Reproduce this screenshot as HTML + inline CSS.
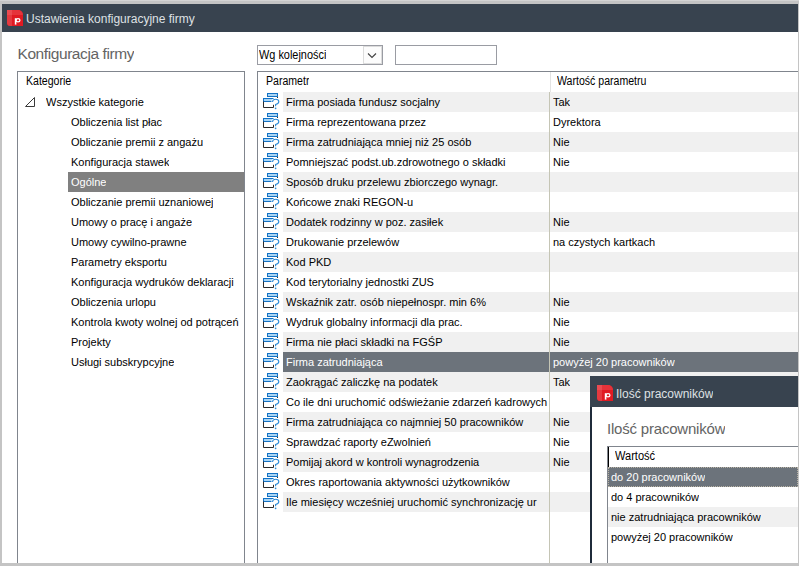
<!DOCTYPE html><html><head><meta charset="utf-8"><style>
*{margin:0;padding:0;box-sizing:border-box}
html,body{width:799px;height:566px;overflow:hidden;background:#c4c4c4}
body{position:relative;font-family:"Liberation Sans",sans-serif;font-size:11px;color:#000}
.a{position:absolute}
.h{font-size:12px;transform:scaleX(0.88);transform-origin:0 0}
.t{position:absolute;white-space:nowrap;line-height:20px;height:20px;overflow:hidden}
</style></head><body>
<div class="a" style="left:2px;top:4px;width:796px;height:28px;background:#38434f"></div>
<svg width="16" height="16" viewBox="0 0 16 16" style="position:absolute;left:7px;top:10px">
<path d="M0 0H11A5 5 0 0 1 16 5V16H3.5A3.5 3.5 0 0 1 0 12.5Z" fill="#e01a22"/>
<path d="M0 0H5V5H0Z" fill="#ea4b51"/>
<path d="M5 0H11A5 5 0 0 1 16 5H5Z" fill="#e5333a"/>
<path d="M0 5H5V16H3.5A3.5 3.5 0 0 1 0 12.5Z" fill="#e4393f"/>
<path d="M8.6 8.2V14.6" stroke="#fff" stroke-width="1.6"/>
<ellipse cx="11" cy="10.3" rx="1.95" ry="1.6" stroke="#fff" stroke-width="1.25" fill="none"/>
</svg>
<div class="t" style="left:26px;top:9px;font-size:12px;color:#dfe1e4">Ustawienia konfiguracyjne firmy</div>
<div class="a" style="left:2px;top:32px;width:796px;height:531px;background:#fff"></div>
<div class="t" style="left:17.5px;top:43.5px;font-size:15.5px;letter-spacing:-0.42px;color:#646464">Konfiguracja firmy</div>
<div class="a" style="left:257px;top:45px;width:126px;height:20px;border:1px solid #9a9ca3;background:#fff"></div>
<div class="t h" style="left:259px;top:45px;transform:scaleX(0.91)">Wg kolejności</div>
<div class="a" style="left:363px;top:46px;width:19px;height:18px;border:1px solid #dcdcdc;background:#fcfcfc"></div>
<svg class="a" style="left:363px;top:46px" width="19" height="18"><path d="M5 7.5L9 11.5L13 7.5" stroke="#404040" stroke-width="1.1" fill="none"/></svg>
<div class="a" style="left:395px;top:45px;width:102px;height:20px;border:1px solid #9a9ca3;background:#fff"></div>
<div class="a" style="left:17px;top:71px;width:228px;height:500px;border:1px solid #80858d;background:#fff"></div>
<div class="t h" style="left:25.5px;top:71px">Kategorie</div>
<svg class="a" style="left:24px;top:96px" width="12" height="12"><path d="M1.5 10.5L10.5 1.5V10.5Z" stroke="#3a3a3a" fill="none"/></svg>
<div class="t" style="left:46px;top:92px">Wszystkie kategorie</div>
<div class="t" style="left:71px;top:112px">Obliczenia list płac</div>
<div class="t" style="left:71px;top:132px">Obliczanie premii z angażu</div>
<div class="t" style="left:71px;top:152px">Konfiguracja stawek</div>
<div class="a" style="left:68px;top:172px;width:176px;height:20px;background:#808080"></div>
<div class="t" style="left:71px;top:172px;color:#fff">Ogólne</div>
<div class="t" style="left:71px;top:192px">Obliczanie premii uznaniowej</div>
<div class="t" style="left:71px;top:212px">Umowy o pracę i angaże</div>
<div class="t" style="left:71px;top:232px">Umowy cywilno-prawne</div>
<div class="t" style="left:71px;top:252px">Parametry eksportu</div>
<div class="t" style="left:71px;top:272px">Konfiguracja wydruków deklaracji</div>
<div class="t" style="left:71px;top:292px">Obliczenia urlopu</div>
<div class="t" style="left:71px;top:312px">Kontrola kwoty wolnej od potrąceń</div>
<div class="t" style="left:71px;top:332px">Projekty</div>
<div class="t" style="left:71px;top:352px">Usługi subskrypcyjne</div>
<div class="a" style="left:257px;top:71px;width:560px;height:500px;border:1px solid #80858d;background:#fff"></div>
<div class="t h" style="left:265.5px;top:71px">Parametr</div>
<div class="a" style="left:550px;top:72px;width:1px;height:20px;background:#e3e3e3"></div>
<div class="t h" style="left:557px;top:71px">Wartość parametru</div>
<div class="a" style="left:549px;top:92px;width:1px;height:480px;background:#c5c5b5"></div>
<div class="a" style="left:283px;top:92px;width:266px;height:20px;background:#f0f0f0"></div>
<div class="a" style="left:550px;top:92px;width:248px;height:20px;background:#f0f0f0"></div>
<svg width="20" height="20" style="position:absolute;left:263px;top:92px" viewBox="0 0 20 20">
<rect x="4.5" y="1.5" width="10" height="3" fill="#a9d5f5" stroke="#1271c4"/>
<path d="M14.5 5V6" stroke="#333"/>
<rect x="0.5" y="6.5" width="10" height="3" fill="#a9d5f5" stroke="#1271c4"/>
<path d="M0.5 9.5V15.5H10.5V12.8" stroke="#2b2b2b" fill="none"/>
<path d="M9.3 9.8Q10 7.2 12.6 7.2Q15.8 7.2 15.8 9.8Q15.8 11.6 12.6 12.5V14.2" stroke="#fff" stroke-width="2.6" fill="none"/>
<path d="M9.3 9.8Q10 7.2 12.6 7.2Q15.8 7.2 15.8 9.8Q15.8 11.6 12.6 12.5V14.2" stroke="#2b8ad6" stroke-width="1.1" fill="none"/>
<circle cx="12.6" cy="16.3" r="0.85" fill="#2b8ad6"/>
</svg>
<div class="t" style="left:286px;top:92px;width:263px;color:#000">Firma posiada fundusz socjalny</div>
<div class="t" style="left:553px;top:92px;color:#000">Tak</div>
<svg width="20" height="20" style="position:absolute;left:263px;top:112px" viewBox="0 0 20 20">
<rect x="4.5" y="1.5" width="10" height="3" fill="#a9d5f5" stroke="#1271c4"/>
<path d="M14.5 5V6" stroke="#333"/>
<rect x="0.5" y="6.5" width="10" height="3" fill="#a9d5f5" stroke="#1271c4"/>
<path d="M0.5 9.5V15.5H10.5V12.8" stroke="#2b2b2b" fill="none"/>
<path d="M9.3 9.8Q10 7.2 12.6 7.2Q15.8 7.2 15.8 9.8Q15.8 11.6 12.6 12.5V14.2" stroke="#fff" stroke-width="2.6" fill="none"/>
<path d="M9.3 9.8Q10 7.2 12.6 7.2Q15.8 7.2 15.8 9.8Q15.8 11.6 12.6 12.5V14.2" stroke="#2b8ad6" stroke-width="1.1" fill="none"/>
<circle cx="12.6" cy="16.3" r="0.85" fill="#2b8ad6"/>
</svg>
<div class="t" style="left:286px;top:112px;width:263px;color:#000">Firma reprezentowana przez</div>
<div class="t" style="left:553px;top:112px;color:#000">Dyrektora</div>
<div class="a" style="left:283px;top:132px;width:266px;height:20px;background:#f0f0f0"></div>
<div class="a" style="left:550px;top:132px;width:248px;height:20px;background:#f0f0f0"></div>
<svg width="20" height="20" style="position:absolute;left:263px;top:132px" viewBox="0 0 20 20">
<rect x="4.5" y="1.5" width="10" height="3" fill="#a9d5f5" stroke="#1271c4"/>
<path d="M14.5 5V6" stroke="#333"/>
<rect x="0.5" y="6.5" width="10" height="3" fill="#a9d5f5" stroke="#1271c4"/>
<path d="M0.5 9.5V15.5H10.5V12.8" stroke="#2b2b2b" fill="none"/>
<path d="M9.3 9.8Q10 7.2 12.6 7.2Q15.8 7.2 15.8 9.8Q15.8 11.6 12.6 12.5V14.2" stroke="#fff" stroke-width="2.6" fill="none"/>
<path d="M9.3 9.8Q10 7.2 12.6 7.2Q15.8 7.2 15.8 9.8Q15.8 11.6 12.6 12.5V14.2" stroke="#2b8ad6" stroke-width="1.1" fill="none"/>
<circle cx="12.6" cy="16.3" r="0.85" fill="#2b8ad6"/>
</svg>
<div class="t" style="left:286px;top:132px;width:263px;color:#000">Firma zatrudniająca mniej niż 25 osób</div>
<div class="t" style="left:553px;top:132px;color:#000">Nie</div>
<svg width="20" height="20" style="position:absolute;left:263px;top:152px" viewBox="0 0 20 20">
<rect x="4.5" y="1.5" width="10" height="3" fill="#a9d5f5" stroke="#1271c4"/>
<path d="M14.5 5V6" stroke="#333"/>
<rect x="0.5" y="6.5" width="10" height="3" fill="#a9d5f5" stroke="#1271c4"/>
<path d="M0.5 9.5V15.5H10.5V12.8" stroke="#2b2b2b" fill="none"/>
<path d="M9.3 9.8Q10 7.2 12.6 7.2Q15.8 7.2 15.8 9.8Q15.8 11.6 12.6 12.5V14.2" stroke="#fff" stroke-width="2.6" fill="none"/>
<path d="M9.3 9.8Q10 7.2 12.6 7.2Q15.8 7.2 15.8 9.8Q15.8 11.6 12.6 12.5V14.2" stroke="#2b8ad6" stroke-width="1.1" fill="none"/>
<circle cx="12.6" cy="16.3" r="0.85" fill="#2b8ad6"/>
</svg>
<div class="t" style="left:286px;top:152px;width:263px;color:#000">Pomniejszać podst.ub.zdrowotnego o składki</div>
<div class="t" style="left:553px;top:152px;color:#000">Nie</div>
<div class="a" style="left:283px;top:172px;width:266px;height:20px;background:#f0f0f0"></div>
<div class="a" style="left:550px;top:172px;width:248px;height:20px;background:#f0f0f0"></div>
<svg width="20" height="20" style="position:absolute;left:263px;top:172px" viewBox="0 0 20 20">
<rect x="4.5" y="1.5" width="10" height="3" fill="#a9d5f5" stroke="#1271c4"/>
<path d="M14.5 5V6" stroke="#333"/>
<rect x="0.5" y="6.5" width="10" height="3" fill="#a9d5f5" stroke="#1271c4"/>
<path d="M0.5 9.5V15.5H10.5V12.8" stroke="#2b2b2b" fill="none"/>
<path d="M9.3 9.8Q10 7.2 12.6 7.2Q15.8 7.2 15.8 9.8Q15.8 11.6 12.6 12.5V14.2" stroke="#fff" stroke-width="2.6" fill="none"/>
<path d="M9.3 9.8Q10 7.2 12.6 7.2Q15.8 7.2 15.8 9.8Q15.8 11.6 12.6 12.5V14.2" stroke="#2b8ad6" stroke-width="1.1" fill="none"/>
<circle cx="12.6" cy="16.3" r="0.85" fill="#2b8ad6"/>
</svg>
<div class="t" style="left:286px;top:172px;width:263px;color:#000">Sposób druku przelewu zbiorczego wynagr.</div>
<svg width="20" height="20" style="position:absolute;left:263px;top:192px" viewBox="0 0 20 20">
<rect x="4.5" y="1.5" width="10" height="3" fill="#a9d5f5" stroke="#1271c4"/>
<path d="M14.5 5V6" stroke="#333"/>
<rect x="0.5" y="6.5" width="10" height="3" fill="#a9d5f5" stroke="#1271c4"/>
<path d="M0.5 9.5V15.5H10.5V12.8" stroke="#2b2b2b" fill="none"/>
<path d="M9.3 9.8Q10 7.2 12.6 7.2Q15.8 7.2 15.8 9.8Q15.8 11.6 12.6 12.5V14.2" stroke="#fff" stroke-width="2.6" fill="none"/>
<path d="M9.3 9.8Q10 7.2 12.6 7.2Q15.8 7.2 15.8 9.8Q15.8 11.6 12.6 12.5V14.2" stroke="#2b8ad6" stroke-width="1.1" fill="none"/>
<circle cx="12.6" cy="16.3" r="0.85" fill="#2b8ad6"/>
</svg>
<div class="t" style="left:286px;top:192px;width:263px;color:#000">Końcowe znaki REGON-u</div>
<div class="a" style="left:283px;top:212px;width:266px;height:20px;background:#f0f0f0"></div>
<div class="a" style="left:550px;top:212px;width:248px;height:20px;background:#f0f0f0"></div>
<svg width="20" height="20" style="position:absolute;left:263px;top:212px" viewBox="0 0 20 20">
<rect x="4.5" y="1.5" width="10" height="3" fill="#a9d5f5" stroke="#1271c4"/>
<path d="M14.5 5V6" stroke="#333"/>
<rect x="0.5" y="6.5" width="10" height="3" fill="#a9d5f5" stroke="#1271c4"/>
<path d="M0.5 9.5V15.5H10.5V12.8" stroke="#2b2b2b" fill="none"/>
<path d="M9.3 9.8Q10 7.2 12.6 7.2Q15.8 7.2 15.8 9.8Q15.8 11.6 12.6 12.5V14.2" stroke="#fff" stroke-width="2.6" fill="none"/>
<path d="M9.3 9.8Q10 7.2 12.6 7.2Q15.8 7.2 15.8 9.8Q15.8 11.6 12.6 12.5V14.2" stroke="#2b8ad6" stroke-width="1.1" fill="none"/>
<circle cx="12.6" cy="16.3" r="0.85" fill="#2b8ad6"/>
</svg>
<div class="t" style="left:286px;top:212px;width:263px;color:#000">Dodatek rodzinny w poz. zasiłek</div>
<div class="t" style="left:553px;top:212px;color:#000">Nie</div>
<svg width="20" height="20" style="position:absolute;left:263px;top:232px" viewBox="0 0 20 20">
<rect x="4.5" y="1.5" width="10" height="3" fill="#a9d5f5" stroke="#1271c4"/>
<path d="M14.5 5V6" stroke="#333"/>
<rect x="0.5" y="6.5" width="10" height="3" fill="#a9d5f5" stroke="#1271c4"/>
<path d="M0.5 9.5V15.5H10.5V12.8" stroke="#2b2b2b" fill="none"/>
<path d="M9.3 9.8Q10 7.2 12.6 7.2Q15.8 7.2 15.8 9.8Q15.8 11.6 12.6 12.5V14.2" stroke="#fff" stroke-width="2.6" fill="none"/>
<path d="M9.3 9.8Q10 7.2 12.6 7.2Q15.8 7.2 15.8 9.8Q15.8 11.6 12.6 12.5V14.2" stroke="#2b8ad6" stroke-width="1.1" fill="none"/>
<circle cx="12.6" cy="16.3" r="0.85" fill="#2b8ad6"/>
</svg>
<div class="t" style="left:286px;top:232px;width:263px;color:#000">Drukowanie przelewów</div>
<div class="t" style="left:553px;top:232px;color:#000">na czystych kartkach</div>
<div class="a" style="left:283px;top:252px;width:266px;height:20px;background:#f0f0f0"></div>
<div class="a" style="left:550px;top:252px;width:248px;height:20px;background:#f0f0f0"></div>
<svg width="20" height="20" style="position:absolute;left:263px;top:252px" viewBox="0 0 20 20">
<rect x="4.5" y="1.5" width="10" height="3" fill="#a9d5f5" stroke="#1271c4"/>
<path d="M14.5 5V6" stroke="#333"/>
<rect x="0.5" y="6.5" width="10" height="3" fill="#a9d5f5" stroke="#1271c4"/>
<path d="M0.5 9.5V15.5H10.5V12.8" stroke="#2b2b2b" fill="none"/>
<path d="M9.3 9.8Q10 7.2 12.6 7.2Q15.8 7.2 15.8 9.8Q15.8 11.6 12.6 12.5V14.2" stroke="#fff" stroke-width="2.6" fill="none"/>
<path d="M9.3 9.8Q10 7.2 12.6 7.2Q15.8 7.2 15.8 9.8Q15.8 11.6 12.6 12.5V14.2" stroke="#2b8ad6" stroke-width="1.1" fill="none"/>
<circle cx="12.6" cy="16.3" r="0.85" fill="#2b8ad6"/>
</svg>
<div class="t" style="left:286px;top:252px;width:263px;color:#000">Kod PKD</div>
<svg width="20" height="20" style="position:absolute;left:263px;top:272px" viewBox="0 0 20 20">
<rect x="4.5" y="1.5" width="10" height="3" fill="#a9d5f5" stroke="#1271c4"/>
<path d="M14.5 5V6" stroke="#333"/>
<rect x="0.5" y="6.5" width="10" height="3" fill="#a9d5f5" stroke="#1271c4"/>
<path d="M0.5 9.5V15.5H10.5V12.8" stroke="#2b2b2b" fill="none"/>
<path d="M9.3 9.8Q10 7.2 12.6 7.2Q15.8 7.2 15.8 9.8Q15.8 11.6 12.6 12.5V14.2" stroke="#fff" stroke-width="2.6" fill="none"/>
<path d="M9.3 9.8Q10 7.2 12.6 7.2Q15.8 7.2 15.8 9.8Q15.8 11.6 12.6 12.5V14.2" stroke="#2b8ad6" stroke-width="1.1" fill="none"/>
<circle cx="12.6" cy="16.3" r="0.85" fill="#2b8ad6"/>
</svg>
<div class="t" style="left:286px;top:272px;width:263px;color:#000">Kod terytorialny jednostki ZUS</div>
<div class="a" style="left:283px;top:292px;width:266px;height:20px;background:#f0f0f0"></div>
<div class="a" style="left:550px;top:292px;width:248px;height:20px;background:#f0f0f0"></div>
<svg width="20" height="20" style="position:absolute;left:263px;top:292px" viewBox="0 0 20 20">
<rect x="4.5" y="1.5" width="10" height="3" fill="#a9d5f5" stroke="#1271c4"/>
<path d="M14.5 5V6" stroke="#333"/>
<rect x="0.5" y="6.5" width="10" height="3" fill="#a9d5f5" stroke="#1271c4"/>
<path d="M0.5 9.5V15.5H10.5V12.8" stroke="#2b2b2b" fill="none"/>
<path d="M9.3 9.8Q10 7.2 12.6 7.2Q15.8 7.2 15.8 9.8Q15.8 11.6 12.6 12.5V14.2" stroke="#fff" stroke-width="2.6" fill="none"/>
<path d="M9.3 9.8Q10 7.2 12.6 7.2Q15.8 7.2 15.8 9.8Q15.8 11.6 12.6 12.5V14.2" stroke="#2b8ad6" stroke-width="1.1" fill="none"/>
<circle cx="12.6" cy="16.3" r="0.85" fill="#2b8ad6"/>
</svg>
<div class="t" style="left:286px;top:292px;width:263px;color:#000">Wskaźnik zatr. osób niepełnospr. min 6%</div>
<div class="t" style="left:553px;top:292px;color:#000">Nie</div>
<svg width="20" height="20" style="position:absolute;left:263px;top:312px" viewBox="0 0 20 20">
<rect x="4.5" y="1.5" width="10" height="3" fill="#a9d5f5" stroke="#1271c4"/>
<path d="M14.5 5V6" stroke="#333"/>
<rect x="0.5" y="6.5" width="10" height="3" fill="#a9d5f5" stroke="#1271c4"/>
<path d="M0.5 9.5V15.5H10.5V12.8" stroke="#2b2b2b" fill="none"/>
<path d="M9.3 9.8Q10 7.2 12.6 7.2Q15.8 7.2 15.8 9.8Q15.8 11.6 12.6 12.5V14.2" stroke="#fff" stroke-width="2.6" fill="none"/>
<path d="M9.3 9.8Q10 7.2 12.6 7.2Q15.8 7.2 15.8 9.8Q15.8 11.6 12.6 12.5V14.2" stroke="#2b8ad6" stroke-width="1.1" fill="none"/>
<circle cx="12.6" cy="16.3" r="0.85" fill="#2b8ad6"/>
</svg>
<div class="t" style="left:286px;top:312px;width:263px;color:#000">Wydruk globalny informacji dla prac.</div>
<div class="t" style="left:553px;top:312px;color:#000">Nie</div>
<div class="a" style="left:283px;top:332px;width:266px;height:20px;background:#f0f0f0"></div>
<div class="a" style="left:550px;top:332px;width:248px;height:20px;background:#f0f0f0"></div>
<svg width="20" height="20" style="position:absolute;left:263px;top:332px" viewBox="0 0 20 20">
<rect x="4.5" y="1.5" width="10" height="3" fill="#a9d5f5" stroke="#1271c4"/>
<path d="M14.5 5V6" stroke="#333"/>
<rect x="0.5" y="6.5" width="10" height="3" fill="#a9d5f5" stroke="#1271c4"/>
<path d="M0.5 9.5V15.5H10.5V12.8" stroke="#2b2b2b" fill="none"/>
<path d="M9.3 9.8Q10 7.2 12.6 7.2Q15.8 7.2 15.8 9.8Q15.8 11.6 12.6 12.5V14.2" stroke="#fff" stroke-width="2.6" fill="none"/>
<path d="M9.3 9.8Q10 7.2 12.6 7.2Q15.8 7.2 15.8 9.8Q15.8 11.6 12.6 12.5V14.2" stroke="#2b8ad6" stroke-width="1.1" fill="none"/>
<circle cx="12.6" cy="16.3" r="0.85" fill="#2b8ad6"/>
</svg>
<div class="t" style="left:286px;top:332px;width:263px;color:#000">Firma nie płaci składki na FGŚP</div>
<div class="t" style="left:553px;top:332px;color:#000">Nie</div>
<div class="a" style="left:283px;top:352px;width:266px;height:20px;background:#6c737b"></div>
<div class="a" style="left:550px;top:352px;width:248px;height:20px;background:#6c737b"></div>
<svg width="20" height="20" style="position:absolute;left:263px;top:352px" viewBox="0 0 20 20">
<rect x="4.5" y="1.5" width="10" height="3" fill="#a9d5f5" stroke="#1271c4"/>
<path d="M14.5 5V6" stroke="#333"/>
<rect x="0.5" y="6.5" width="10" height="3" fill="#a9d5f5" stroke="#1271c4"/>
<path d="M0.5 9.5V15.5H10.5V12.8" stroke="#2b2b2b" fill="none"/>
<path d="M9.3 9.8Q10 7.2 12.6 7.2Q15.8 7.2 15.8 9.8Q15.8 11.6 12.6 12.5V14.2" stroke="#fff" stroke-width="2.6" fill="none"/>
<path d="M9.3 9.8Q10 7.2 12.6 7.2Q15.8 7.2 15.8 9.8Q15.8 11.6 12.6 12.5V14.2" stroke="#2b8ad6" stroke-width="1.1" fill="none"/>
<circle cx="12.6" cy="16.3" r="0.85" fill="#2b8ad6"/>
</svg>
<div class="t" style="left:286px;top:352px;width:263px;color:#fff">Firma zatrudniająca</div>
<div class="t" style="left:553px;top:352px;color:#fff">powyżej 20 pracowników</div>
<div class="a" style="left:283px;top:372px;width:266px;height:20px;background:#f0f0f0"></div>
<div class="a" style="left:550px;top:372px;width:248px;height:20px;background:#f0f0f0"></div>
<svg width="20" height="20" style="position:absolute;left:263px;top:372px" viewBox="0 0 20 20">
<rect x="4.5" y="1.5" width="10" height="3" fill="#a9d5f5" stroke="#1271c4"/>
<path d="M14.5 5V6" stroke="#333"/>
<rect x="0.5" y="6.5" width="10" height="3" fill="#a9d5f5" stroke="#1271c4"/>
<path d="M0.5 9.5V15.5H10.5V12.8" stroke="#2b2b2b" fill="none"/>
<path d="M9.3 9.8Q10 7.2 12.6 7.2Q15.8 7.2 15.8 9.8Q15.8 11.6 12.6 12.5V14.2" stroke="#fff" stroke-width="2.6" fill="none"/>
<path d="M9.3 9.8Q10 7.2 12.6 7.2Q15.8 7.2 15.8 9.8Q15.8 11.6 12.6 12.5V14.2" stroke="#2b8ad6" stroke-width="1.1" fill="none"/>
<circle cx="12.6" cy="16.3" r="0.85" fill="#2b8ad6"/>
</svg>
<div class="t" style="left:286px;top:372px;width:263px;color:#000">Zaokrągać zaliczkę na podatek</div>
<div class="t" style="left:553px;top:372px;color:#000">Tak</div>
<svg width="20" height="20" style="position:absolute;left:263px;top:392px" viewBox="0 0 20 20">
<rect x="4.5" y="1.5" width="10" height="3" fill="#a9d5f5" stroke="#1271c4"/>
<path d="M14.5 5V6" stroke="#333"/>
<rect x="0.5" y="6.5" width="10" height="3" fill="#a9d5f5" stroke="#1271c4"/>
<path d="M0.5 9.5V15.5H10.5V12.8" stroke="#2b2b2b" fill="none"/>
<path d="M9.3 9.8Q10 7.2 12.6 7.2Q15.8 7.2 15.8 9.8Q15.8 11.6 12.6 12.5V14.2" stroke="#fff" stroke-width="2.6" fill="none"/>
<path d="M9.3 9.8Q10 7.2 12.6 7.2Q15.8 7.2 15.8 9.8Q15.8 11.6 12.6 12.5V14.2" stroke="#2b8ad6" stroke-width="1.1" fill="none"/>
<circle cx="12.6" cy="16.3" r="0.85" fill="#2b8ad6"/>
</svg>
<div class="t" style="left:286px;top:392px;width:263px;color:#000">Co ile dni uruchomić odświeżanie zdarzeń kadrowych</div>
<div class="a" style="left:283px;top:412px;width:266px;height:20px;background:#f0f0f0"></div>
<div class="a" style="left:550px;top:412px;width:248px;height:20px;background:#f0f0f0"></div>
<svg width="20" height="20" style="position:absolute;left:263px;top:412px" viewBox="0 0 20 20">
<rect x="4.5" y="1.5" width="10" height="3" fill="#a9d5f5" stroke="#1271c4"/>
<path d="M14.5 5V6" stroke="#333"/>
<rect x="0.5" y="6.5" width="10" height="3" fill="#a9d5f5" stroke="#1271c4"/>
<path d="M0.5 9.5V15.5H10.5V12.8" stroke="#2b2b2b" fill="none"/>
<path d="M9.3 9.8Q10 7.2 12.6 7.2Q15.8 7.2 15.8 9.8Q15.8 11.6 12.6 12.5V14.2" stroke="#fff" stroke-width="2.6" fill="none"/>
<path d="M9.3 9.8Q10 7.2 12.6 7.2Q15.8 7.2 15.8 9.8Q15.8 11.6 12.6 12.5V14.2" stroke="#2b8ad6" stroke-width="1.1" fill="none"/>
<circle cx="12.6" cy="16.3" r="0.85" fill="#2b8ad6"/>
</svg>
<div class="t" style="left:286px;top:412px;width:263px;color:#000">Firma zatrudniająca co najmniej 50 pracowników</div>
<div class="t" style="left:553px;top:412px;color:#000">Nie</div>
<svg width="20" height="20" style="position:absolute;left:263px;top:432px" viewBox="0 0 20 20">
<rect x="4.5" y="1.5" width="10" height="3" fill="#a9d5f5" stroke="#1271c4"/>
<path d="M14.5 5V6" stroke="#333"/>
<rect x="0.5" y="6.5" width="10" height="3" fill="#a9d5f5" stroke="#1271c4"/>
<path d="M0.5 9.5V15.5H10.5V12.8" stroke="#2b2b2b" fill="none"/>
<path d="M9.3 9.8Q10 7.2 12.6 7.2Q15.8 7.2 15.8 9.8Q15.8 11.6 12.6 12.5V14.2" stroke="#fff" stroke-width="2.6" fill="none"/>
<path d="M9.3 9.8Q10 7.2 12.6 7.2Q15.8 7.2 15.8 9.8Q15.8 11.6 12.6 12.5V14.2" stroke="#2b8ad6" stroke-width="1.1" fill="none"/>
<circle cx="12.6" cy="16.3" r="0.85" fill="#2b8ad6"/>
</svg>
<div class="t" style="left:286px;top:432px;width:263px;color:#000">Sprawdzać raporty eZwolnień</div>
<div class="t" style="left:553px;top:432px;color:#000">Nie</div>
<div class="a" style="left:283px;top:452px;width:266px;height:20px;background:#f0f0f0"></div>
<div class="a" style="left:550px;top:452px;width:248px;height:20px;background:#f0f0f0"></div>
<svg width="20" height="20" style="position:absolute;left:263px;top:452px" viewBox="0 0 20 20">
<rect x="4.5" y="1.5" width="10" height="3" fill="#a9d5f5" stroke="#1271c4"/>
<path d="M14.5 5V6" stroke="#333"/>
<rect x="0.5" y="6.5" width="10" height="3" fill="#a9d5f5" stroke="#1271c4"/>
<path d="M0.5 9.5V15.5H10.5V12.8" stroke="#2b2b2b" fill="none"/>
<path d="M9.3 9.8Q10 7.2 12.6 7.2Q15.8 7.2 15.8 9.8Q15.8 11.6 12.6 12.5V14.2" stroke="#fff" stroke-width="2.6" fill="none"/>
<path d="M9.3 9.8Q10 7.2 12.6 7.2Q15.8 7.2 15.8 9.8Q15.8 11.6 12.6 12.5V14.2" stroke="#2b8ad6" stroke-width="1.1" fill="none"/>
<circle cx="12.6" cy="16.3" r="0.85" fill="#2b8ad6"/>
</svg>
<div class="t" style="left:286px;top:452px;width:263px;color:#000">Pomijaj akord w kontroli wynagrodzenia</div>
<div class="t" style="left:553px;top:452px;color:#000">Nie</div>
<svg width="20" height="20" style="position:absolute;left:263px;top:472px" viewBox="0 0 20 20">
<rect x="4.5" y="1.5" width="10" height="3" fill="#a9d5f5" stroke="#1271c4"/>
<path d="M14.5 5V6" stroke="#333"/>
<rect x="0.5" y="6.5" width="10" height="3" fill="#a9d5f5" stroke="#1271c4"/>
<path d="M0.5 9.5V15.5H10.5V12.8" stroke="#2b2b2b" fill="none"/>
<path d="M9.3 9.8Q10 7.2 12.6 7.2Q15.8 7.2 15.8 9.8Q15.8 11.6 12.6 12.5V14.2" stroke="#fff" stroke-width="2.6" fill="none"/>
<path d="M9.3 9.8Q10 7.2 12.6 7.2Q15.8 7.2 15.8 9.8Q15.8 11.6 12.6 12.5V14.2" stroke="#2b8ad6" stroke-width="1.1" fill="none"/>
<circle cx="12.6" cy="16.3" r="0.85" fill="#2b8ad6"/>
</svg>
<div class="t" style="left:286px;top:472px;width:263px;color:#000">Okres raportowania aktywności użytkowników</div>
<div class="a" style="left:283px;top:492px;width:266px;height:20px;background:#f0f0f0"></div>
<div class="a" style="left:550px;top:492px;width:248px;height:20px;background:#f0f0f0"></div>
<svg width="20" height="20" style="position:absolute;left:263px;top:492px" viewBox="0 0 20 20">
<rect x="4.5" y="1.5" width="10" height="3" fill="#a9d5f5" stroke="#1271c4"/>
<path d="M14.5 5V6" stroke="#333"/>
<rect x="0.5" y="6.5" width="10" height="3" fill="#a9d5f5" stroke="#1271c4"/>
<path d="M0.5 9.5V15.5H10.5V12.8" stroke="#2b2b2b" fill="none"/>
<path d="M9.3 9.8Q10 7.2 12.6 7.2Q15.8 7.2 15.8 9.8Q15.8 11.6 12.6 12.5V14.2" stroke="#fff" stroke-width="2.6" fill="none"/>
<path d="M9.3 9.8Q10 7.2 12.6 7.2Q15.8 7.2 15.8 9.8Q15.8 11.6 12.6 12.5V14.2" stroke="#2b8ad6" stroke-width="1.1" fill="none"/>
<circle cx="12.6" cy="16.3" r="0.85" fill="#2b8ad6"/>
</svg>
<div class="t" style="left:286px;top:492px;width:263px;color:#000">Ile miesięcy wcześniej uruchomić synchronizację ur</div>
<div class="a" style="left:590px;top:376px;width:208px;height:187px;background:#fff;border-left:2px solid #1f2b3a"></div>
<div class="a" style="left:590px;top:376px;width:208px;height:31px;background:#38434f"></div>
<svg width="16" height="16" viewBox="0 0 16 16" style="position:absolute;left:597px;top:385px">
<path d="M0 0H11A5 5 0 0 1 16 5V16H3.5A3.5 3.5 0 0 1 0 12.5Z" fill="#e01a22"/>
<path d="M0 0H5V5H0Z" fill="#ea4b51"/>
<path d="M5 0H11A5 5 0 0 1 16 5H5Z" fill="#e5333a"/>
<path d="M0 5H5V16H3.5A3.5 3.5 0 0 1 0 12.5Z" fill="#e4393f"/>
<path d="M8.6 8.2V14.6" stroke="#fff" stroke-width="1.6"/>
<ellipse cx="11" cy="10.3" rx="1.95" ry="1.6" stroke="#fff" stroke-width="1.25" fill="none"/>
</svg>
<div class="t" style="left:616px;top:384px;font-size:12px;color:#dfe1e4">Ilość pracowników</div>
<div class="t" style="left:607px;top:418.8px;font-size:15px;letter-spacing:-0.2px;color:#646464">Ilość pracowników</div>
<div class="a" style="left:607px;top:446px;width:200px;height:130px;border:1px solid #80858d;background:#fff"></div>
<div class="a" style="left:608px;top:447px;width:1px;height:20px;background:#000"></div>
<div class="t h" style="left:615px;top:446px;transform:scaleX(0.92)">Wartość</div>
<div class="a" style="left:608px;top:467px;width:190px;height:20px;background:#6c737b;border:1px dotted #b8b2a4"></div>
<div class="t" style="left:611px;top:467px;color:#fff">do 20 pracowników</div>
<div class="t" style="left:611px;top:487px;color:#000">do 4 pracowników</div>
<div class="a" style="left:608px;top:507px;width:190px;height:20px;background:#f0f0f0"></div>
<div class="t" style="left:611px;top:507px;color:#000">nie zatrudniająca pracowników</div>
<div class="t" style="left:611px;top:527px;color:#000">powyżej 20 pracowników</div>
<div class="a" style="left:0;top:0;width:799px;height:4px;background:#c4c4c4"></div>
<div class="a" style="left:0;top:0;width:2px;height:566px;background:#c4c4c4"></div>
<div class="a" style="left:798px;top:0;width:1px;height:566px;background:#c4c4c4"></div>
<div class="a" style="left:0;top:563px;width:799px;height:3px;background:#c4c4c4"></div>
<div class="a" style="left:0;top:0;width:799px;height:1px;background:#d4d4d4"></div>
</body></html>
